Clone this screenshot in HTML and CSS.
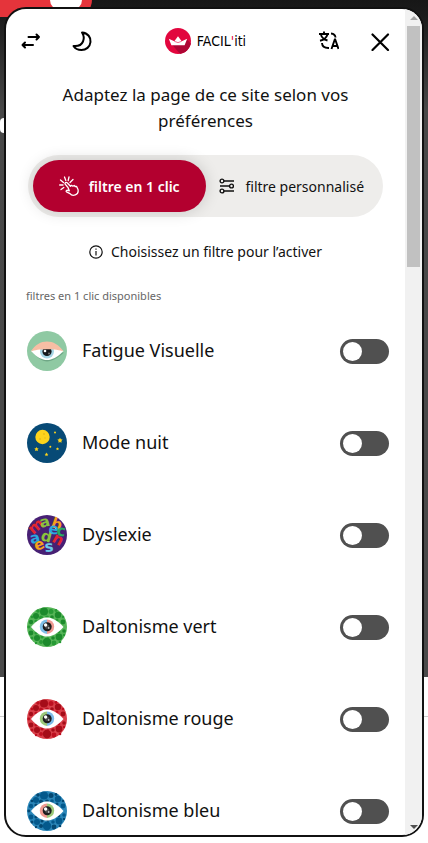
FILE: index.html
```
<!DOCTYPE html>
<html lang="fr">
<head>
<meta charset="utf-8">
<meta name="viewport" content="width=device-width, initial-scale=1">
<title>FACIL'iti</title>
<link rel="stylesheet" href="styles.css">
</head>
<body>
<svg class="defs" aria-hidden="true">
  <defs>
    <symbol id="dots" viewBox="0 0 40 40">
      <circle class="base" cx="20" cy="20" r="20"/>
      <g class="dot-a">
        <circle cx="17" cy="4.5" r="4"/><circle cx="9" cy="9" r="3"/><circle cx="31" cy="8" r="3.2"/><circle cx="4" cy="15" r="2.2"/>
        <circle cx="36" cy="15" r="2.4"/><circle cx="20" cy="35" r="4.2"/><circle cx="10" cy="31" r="3"/><circle cx="32" cy="30" r="3.4"/>
        <circle cx="4" cy="26" r="2.4"/><circle cx="37" cy="24" r="1.8"/><circle cx="25" cy="10" r="1.8"/><circle cx="26" cy="31" r="1.8"/>
      </g>
      <g class="dot-b">
        <circle cx="24" cy="4.5" r="2.5"/><circle cx="11" cy="4" r="1.8"/><circle cx="14" cy="10.5" r="2"/><circle cx="20" cy="10.5" r="2"/>
        <circle cx="29" cy="3.5" r="1.4"/><circle cx="30" cy="13" r="1.5"/><circle cx="5" cy="10" r="1.3"/><circle cx="36" cy="10" r="1.3"/>
        <circle cx="9" cy="14" r="1.6"/><circle cx="14" cy="35" r="2"/><circle cx="27" cy="36" r="2.4"/><circle cx="15" cy="30" r="1.6"/>
        <circle cx="5" cy="31" r="1.5"/><circle cx="33" cy="35" r="1.3"/><circle cx="9" cy="26" r="1.6"/><circle cx="37" cy="28" r="1.2"/>
        <circle cx="1.8" cy="20" r="1.4"/><circle cx="9" cy="36" r="1.2"/><circle cx="21" cy="29.5" r="1.3"/><circle cx="32" cy="25" r="1.3"/>
      </g>
      <path d="M4 20C10 13 15 10.500 20 10.500S30 13 36.500 20C30 27 25 29.500 20 29.500S10 27 4 20z" fill="#fff"/>
      <path class="iris-l" d="M20 12.500a7.200 7.200 0 0 0 0 14.400z"/>
      <path class="iris-r" d="M20 12.500a7.200 7.200 0 0 1 0 14.400z"/>
      <circle cx="20.200" cy="19.700" r="4.500" fill="#1c1c1e"/>
      <circle cx="20.200" cy="19.700" r="2.300" fill="#4b4b4b"/>
      <circle cx="18.600" cy="18" r="1.700" fill="#fff"/><circle cx="21.800" cy="21" r=".8" fill="#fff"/>
    </symbol>
  </defs>
</svg>

<div class="site" aria-hidden="true">
  <div class="hero">
    <div class="tab"><span class="tab-dot"></span></div>
    <span class="hero-mark"></span>
  </div>
  <hr class="rule">
</div>

<main class="panel">
  <div class="content">
    <header class="header">
      <div class="tools">
        <button class="icon-btn" type="button" aria-label="Changer de côté">
          <svg viewBox="0 0 20 20" fill="none" stroke="#000" stroke-width="2" stroke-linecap="round" stroke-linejoin="round"><path d="M7.500 6h10.500M15.500 3.500L18 6l-2.500 2.500M12 14H1.500M4 11.500L1.500 14 4 16.500"/></svg>
        </button>
        <button class="icon-btn" type="button" aria-label="Mode sombre">
          <svg viewBox="0 0 20 20" fill="none" stroke="#000" stroke-width="2" stroke-linejoin="round"><path d="M10 1.500C16 2 19 6.500 18.500 11c-.5 5-4.500 8-9 8-3.500 0-6.500-1.500-8-4 5 .5 8-1 9.500-4.500C12.300 7.500 12 4.500 10 1.500z"/></svg>
        </button>
      </div>
      <a class="logo" href="#" aria-label="FACIL'iti">
        <svg class="logo-mark" viewBox="0 0 26 26">
          <defs><clipPath id="disc"><circle cx="13" cy="13" r="13"/></clipPath></defs>
          <g clip-path="url(#disc)">
            <rect width="26" height="26" fill="#e2063e"/>
            <path d="M7 16.500L22 11.500l5 5V27H16z" fill="#ae0534"/>
          </g>
          <path d="M3.800 10.700l5.500 2.600L13 8.200l3.700 5.100 5.500-2.600-2.600 6.600H6.400z" fill="#fff"/>
          <path d="M9.300 13.300L13 14.600l3.700-1.300" fill="none" stroke="#e2063e" stroke-width=".6"/>
        </svg>
        <span class="logo-text">FACIL<span class="logo-quote">'</span>iti</span>
      </a>
      <div class="tools tools-end">
        <button class="icon-btn" type="button" aria-label="Langue">
          <svg viewBox="0 0 20 20" fill="none" stroke="#000" stroke-width="1.900"><path d="M0 3h10M5 .5V3M2 4c1 3 3.500 4.700 6.500 5.500M8.500 3.500C7.500 6.500 4.500 9 1 9.800"/><path d="M12 2.500c2.800.2 4.300 1.300 4.500 4M3 12c.2 3.500 2.500 5.200 7 5"/><path d="M12.500 18l3.300-9.500h.4L19.500 18M13.500 15h5"/></svg>
        </button>
        <button class="icon-btn" type="button" aria-label="Fermer">
          <svg viewBox="0 0 20 20" fill="none" stroke="#000" stroke-width="2.200" stroke-linecap="round"><path d="M2.500 3.500l15.500 15.500M18 3.500L2.500 19"/></svg>
        </button>
      </div>
    </header>

    <h1 class="title">Adaptez la page de ce site selon vos préférences</h1>

    <div class="segmented">
      <button class="segment segment-active" type="button">
        <svg class="seg-click" viewBox="0 0 20 20" fill="none" stroke="#fff" stroke-width="1.300" stroke-linecap="round" stroke-linejoin="round"><path d="M9 11.500L6.200 8.200c-.8-1.300 1-2.500 2-1.400l3.300 3.400 1-.9 1.300.9 1.400-.7 1 1 1.300-.2 1.500 3.200c.5 2.300-.5 4.600-2.700 5.400-2.300.8-4.200.2-5.300-1.300l-3.500-1.700c-.9-1 .2-1.900 1.200-1.600l1.600.5z"/><path d="M4.500 6.500L1.500 4M6.800 4.500L5.500 1M9.200 4.500l.8-3.500M11 6.500l3-3M4 9H.700M4.800 11.500L2 13.500"/></svg>
        <span>filtre en 1 clic</span>
      </button>
      <button class="segment" type="button">
        <svg class="seg-sliders" viewBox="0 0 16 16" fill="none" stroke="#111" stroke-width="1.400"><circle cx="3" cy="3" r="1.900"/><circle cx="12.500" cy="8" r="1.900"/><circle cx="3" cy="13" r="1.900"/><path d="M5 3h10M1 8h9.500M5 13h10"/></svg>
        <span>filtre personnalisé</span>
      </button>
    </div>

    <p class="hint">
      <svg class="hint-icon" viewBox="0 0 14 14" fill="none" stroke="#111"><circle cx="7" cy="7" r="6.200" stroke-width="1.200"/><path d="M7 6v4.500M7 3.500v1.300" stroke-width="1.200"/></svg>
      <span>Choisissez un filtre pour l’activer</span>
    </p>

    <h2 class="label">filtres en 1 clic disponibles</h2>

    <ul class="filters">
      <li class="filter">
        <svg class="badge" viewBox="0 0 40 40">
          <circle cx="20" cy="20" r="20" fill="#8fc9a3"/>
          <path d="M5 21C11 27 15 30.500 20 30.500S31 27 37 21.500z" fill="#6fa786"/>
          <path d="M4 20C11 16 30 16 36.500 20 30 26.500 25 29 20 29S10 26.500 4 20z" fill="#fff"/>
          <circle cx="20" cy="20.500" r="7" fill="#a5d5e5"/>
          <circle cx="20" cy="20.500" r="4.600" fill="#15181c"/>
          <circle cx="18" cy="20" r="1.300" fill="#fff"/><circle cx="22" cy="22.500" r="1" fill="#777"/>
          <path d="M4 20.500C8 13.500 14 10.500 20 10.500s12 3 16.500 10C30 17.500 10 17.500 4 20.500z" fill="#f7bea4"/>
        </svg>
        <label class="name" for="f1">Fatigue Visuelle</label>
        <input class="switch" type="checkbox" role="switch" id="f1">
      </li>
      <li class="filter">
        <svg class="badge" viewBox="0 0 40 40">
          <circle cx="20" cy="20" r="20" fill="#074a76"/>
          <circle cx="15.500" cy="14" r="7.200" fill="#fcd31c"/>
          <g fill="#e9bd18"><circle cx="17" cy="11" r="1"/><circle cx="13" cy="16" r="1"/><circle cx="18" cy="15" r=".8"/></g>
          <g fill="#fcd31c">
            <path d="M33 14.800l.9 1.500 1.700.3-1.200 1.300.2 1.800-1.600-.8-1.600.8.2-1.800-1.200-1.300 1.700-.3z"/>
            <path d="M9.500 24l.7 1.300 1.500.2-1.100 1.100.3 1.500-1.400-.7-1.400.7.300-1.500-1.100-1.100 1.500-.2z"/>
            <path d="M19.500 29.500l.6 1.200 1.300.2-1 .9.300 1.400-1.200-.6-1.200.6.300-1.400-1-.9 1.300-.2z"/>
            <path d="M30.500 24.300l.5 1 1.100.1-.8.800.2 1.100-1-.5-1 .5.200-1.100-.8-.8 1.100-.1z"/>
            <circle cx="28" cy="9.500" r="1"/><circle cx="23.300" cy="23.800" r="1"/>
          </g>
        </svg>
        <label class="name" for="f2">Mode nuit</label>
        <input class="switch" type="checkbox" role="switch" id="f2">
      </li>
      <li class="filter">
        <svg class="badge letters" viewBox="0 0 40 40" aria-hidden="true">
          <circle cx="20" cy="20" r="20" fill="#472074"/>
          <text transform="translate(6 20) rotate(-40)" fill="#e3262e">m</text>
          <text transform="translate(14 13) rotate(-15)" fill="#8ac43c">a</text>
          <text transform="translate(23 12) rotate(20)" fill="#f7a11b">b</text>
          <text transform="translate(4 29) rotate(-12)" fill="#29a9e0">a</text>
          <text transform="translate(13 25) rotate(15)" fill="#8ac43c">d</text>
          <text transform="translate(21 18) rotate(10)" fill="#29a9e0">e</text>
          <text transform="translate(29 20) rotate(10)" fill="#27ae60">c</text>
          <text transform="translate(9 36) rotate(-20)" fill="#f7a11b">e</text>
          <text transform="translate(18 37) rotate(-5)" fill="#6bcbea">s</text>
          <text transform="translate(24 26) rotate(30)" fill="#e3262e">n</text>
        </svg>
        <label class="name" for="f3">Dyslexie</label>
        <input class="switch" type="checkbox" role="switch" id="f3">
      </li>
      <li class="filter">
        <svg class="badge green"><use href="#dots"/></svg>
        <label class="name" for="f4">Daltonisme vert</label>
        <input class="switch" type="checkbox" role="switch" id="f4">
      </li>
      <li class="filter">
        <svg class="badge red"><use href="#dots"/></svg>
        <label class="name" for="f5">Daltonisme rouge</label>
        <input class="switch" type="checkbox" role="switch" id="f5">
      </li>
      <li class="filter">
        <svg class="badge blue"><use href="#dots"/></svg>
        <label class="name" for="f6">Daltonisme bleu</label>
        <input class="switch" type="checkbox" role="switch" id="f6">
      </li>
    </ul>
  </div>
  <div class="scrollbar" aria-hidden="true">
    <span class="arrow arrow-up"></span>
    <span class="track"><span class="thumb"></span></span>
    <span class="arrow arrow-down"></span>
  </div>
</main>
</body>
</html>
```
FILE: styles.css
```
* { box-sizing: border-box; }

body {
  margin: 0;
  height: 100vh;
  overflow: hidden;
  background: #fff;
  color: #111;
  font-family: "Noto Sans", "Open Sans", sans-serif;
}

button { border: 0; background: none; font: inherit; color: inherit; padding: 0; }

.defs { position: absolute; width: 0; height: 0; }

/* page behind the panel */
.hero {
  height: 677px;
  overflow: hidden;
  background: linear-gradient(#171717 0, #1b1b1b 16px, #484848 110px, #4a4a4a 100%);
}
.tab {
  width: 92px;
  height: 17px;
  padding-left: 50px;
  background: #e5343b;
  border-radius: 0 0 24px 0;
}
.tab-dot {
  display: block;
  width: 32px;
  height: 10px;
  background: #fff;
  border-radius: 0 0 16px 16px;
}
.hero-mark {
  display: block;
  width: 8px;
  height: 15px;
  margin-top: 101px;
  border-radius: 8px;
  background: #fff;
}
.rule { margin: 39px 0 0; border: 0; border-top: 1px solid #ccc; }

/* panel */
.panel {
  position: absolute;
  inset: 7px 4px 6px;
  display: flex;
  overflow: hidden;
  background: #fff;
  border: 2px solid #111;
  border-radius: 22px;
}
.content { flex: 1; min-width: 0; overflow: hidden; }

.header {
  display: grid;
  grid-template-columns: 1fr auto 1fr;
  align-items: center;
  height: 64px;
  padding: 0 15px;
}
.tools { display: flex; gap: 31px; }
.tools-end { justify-content: flex-end; }
.icon-btn { width: 20px; height: 20px; }
.icon-btn svg { display: block; width: 20px; height: 20px; }
.logo { display: flex; align-items: center; gap: 6px; color: #000; text-decoration: none; }
.logo-mark { width: 26px; height: 26px; }
.logo-text { font: 14px/24px "Liberation Sans Narrow", "DejaVu Sans Condensed", sans-serif; }
.logo-quote { color: #e2063e; }

.title {
  margin: 9px 50px 21px;
  text-align: center;
  font-size: 17px;
  font-weight: 400;
  line-height: 26px;
}

.segmented {
  display: grid;
  grid-template-columns: 1fr 1fr;
  margin: 0 22px;
  padding: 5px;
  background: #eeedeb;
  border-radius: 31px;
}
.segment {
  display: flex;
  align-items: center;
  justify-content: center;
  gap: 10px;
  height: 52px;
  border-radius: 26px;
  font-size: 14px;
  white-space: nowrap;
}
.segment-active {
  background: #b3002f;
  color: #fff;
  font-weight: 600;
  box-shadow: 0 0 16px rgba(0, 0, 0, .16);
}
.seg-click { width: 20px; height: 20px; }
.seg-sliders { width: 16px; height: 16px; }

.hint {
  display: flex;
  align-items: center;
  justify-content: center;
  gap: 8px;
  margin: 25px 0;
  font-size: 14px;
  line-height: 20px;
}
.hint-icon { width: 14px; height: 14px; }

.label {
  margin: 0 20px;
  color: #666;
  font-size: 11px;
  font-weight: 400;
  line-height: 18px;
}

.filters { margin: 0; padding: 0; list-style: none; }
.filter {
  display: flex;
  align-items: center;
  gap: 15px;
  height: 92px;
  padding: 0 16px 0 21px;
}
.badge { flex: none; width: 40px; height: 40px; overflow: visible; }
.name { flex: 1; padding-bottom: 2px; font-size: 18px; line-height: 26px; }

.letters text { font: 700 15px "DejaVu Sans", sans-serif; }
.green { --base: #56b558; --a: #1c8a2c; --b: #279a35; --l: #7fbfe8; --r: #ef9a92; }
.red { --base: #d9404a; --a: #a50d19; --b: #bd1020; --l: #9cc97a; --r: #7dbbe8; }
.blue { --base: #2b86b8; --a: #04598c; --b: #044872; --l: #f09a90; --r: #9cc97a; }
.base { fill: var(--base); }
.dot-a { fill: var(--a); }
.dot-b { fill: var(--b); }
.iris-l { fill: var(--l); }
.iris-r { fill: var(--r); }

.switch {
  appearance: none;
  flex: none;
  width: 49px;
  height: 25px;
  margin: 0;
  padding: 3px;
  background: #505050;
  border-radius: 13px;
}
.switch::before {
  content: "";
  display: block;
  width: 19px;
  height: 19px;
  background: #fff;
  border-radius: 50%;
}
.switch:checked::before { margin-left: auto; }

.scrollbar { display: flex; flex-direction: column; width: 17px; background: #f1f1f1; }
.arrow { display: flex; align-items: center; justify-content: center; height: 17px; }
.arrow::before { content: ""; border: 4px solid transparent; }
.arrow-up::before { border-top: 0; border-bottom-color: #a3a3a3; }
.arrow-down::before { border-bottom: 0; border-top-color: #505050; }
.track { flex: 1; padding: 0 2px; }
.thumb { display: block; height: 30.4%; background: #c1c1c1; }
```
